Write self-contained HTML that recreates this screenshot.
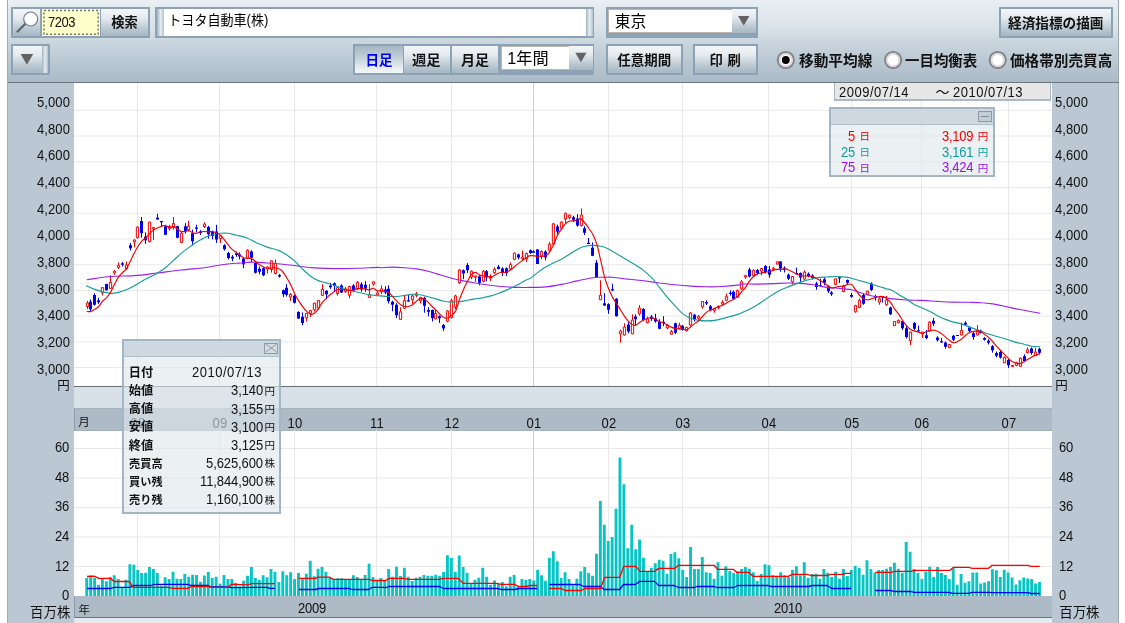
<!DOCTYPE html>
<html lang="ja"><head><meta charset="utf-8"><title>7203 トヨタ自動車(株) チャート</title>
<style>
html,body{margin:0;padding:0;background:#fff;}
body{width:1125px;height:623px;overflow:hidden;position:relative;font-family:"Liberation Sans",sans-serif;}
#app{position:absolute;left:0;top:0;width:1125px;height:623px;overflow:hidden;}
#app div{position:absolute;box-sizing:border-box;}
#app svg{position:absolute;left:0;top:0;}
.sr{position:absolute;overflow:hidden;white-space:nowrap;color:transparent;font-family:"Liberation Sans",sans-serif;}
.t{position:absolute;white-space:nowrap;font-family:"Liberation Sans",sans-serif;letter-spacing:-0.25px;will-change:transform;transform:scaleY(1.06);}
svg text{font-family:"Liberation Sans","Noto Sans CJK JP",sans-serif;}
</style></head>
<body><div id="app">
<div style="left:7px;top:0px;width:1px;height:623px;background:#a3abb3;"></div>
<div style="left:8px;top:0px;width:1111px;height:83px;background:linear-gradient(#e9eff3 0%,#dbe4ea 30%,#c3d0da 60%,#a9b9c6 100%);"></div>
<div style="left:1118px;top:0px;width:1px;height:623px;background:#9aa6b0;"></div>
<div style="left:8px;top:82px;width:1111px;height:1px;background:#6c7680;"></div>
<div style="left:8px;top:83px;width:66px;height:540px;background:#bbc8d3;"></div>
<div style="left:1052px;top:83px;width:66px;height:540px;background:#bbc8d3;"></div>
<div style="left:74px;top:83px;width:978px;height:303px;background:#fff;"></div>
<div style="left:74px;top:386px;width:978px;height:1px;background:#6a6f74;"></div>
<div style="left:74px;top:387px;width:978px;height:21px;background:#d9e1e8;"></div>
<div style="left:74px;top:408px;width:978px;height:22.6px;background:#aebbc7;border-top:1px solid #a3b1bd;border-bottom:1px solid #a3b1bd;border-left:1.5px solid #8f9ca8;"></div>
<div style="left:74px;top:430.6px;width:978px;height:165.4px;background:#fff;"></div>
<div style="left:74px;top:596px;width:978px;height:22px;background:#aebbc7;border-bottom:1px solid #6b747c;border-left:1.5px solid #8f9ca8;"></div>
<div style="left:74px;top:618px;width:978px;height:5px;background:#e3eaf0;"></div>
<div style="left:10.5px;top:7px;width:139px;height:31px;background:#8da2b4;"></div>
<div style="left:12.5px;top:9px;width:27.7px;height:27px;background:linear-gradient(#f3f6f8 0%,#e3e9ee 35%,#b9c7d1 75%,#a6b8c4 100%);"></div>
<div style="left:42px;top:8.8px;width:58px;height:27.5px;background:#ffffcc;"></div>
<div style="left:100.5px;top:9px;width:47px;height:27px;background:linear-gradient(#f3f6f8 0%,#e3e9ee 35%,#b9c7d1 75%,#a6b8c4 100%);"></div>
<div style="left:155px;top:7px;width:439px;height:31px;background:#8da2b4;"></div>
<div style="left:157px;top:9px;width:7px;height:27px;background:linear-gradient(90deg,#9fb2c1 0%,#e6ecf0 50%,#b4c3ce 100%);"></div>
<div style="left:164px;top:8.5px;width:421.5px;height:27.5px;background:#fff;"></div>
<div style="left:585.5px;top:9px;width:7px;height:27px;background:linear-gradient(90deg,#9fb2c1 0%,#e6ecf0 50%,#b4c3ce 100%);"></div>
<div style="left:605.5px;top:7px;width:152px;height:31px;background:#8da2b4;"></div>
<div style="left:607.5px;top:8.5px;width:124px;height:24px;background:#fff;border:1px solid rgba(125,112,100,0.5);border-right:none;"></div>
<div style="left:731.5px;top:8.5px;width:24.5px;height:24px;background:linear-gradient(#f3f6f8 0%,#e3e9ee 35%,#b9c7d1 75%,#a6b8c4 100%);"></div>
<div style="left:998.5px;top:7px;width:114.5px;height:31px;background:#8da2b4;"></div>
<div style="left:1000.5px;top:9px;width:110.5px;height:27px;background:linear-gradient(#f3f6f8 0%,#e3e9ee 35%,#b9c7d1 75%,#a6b8c4 100%);"></div>
<div style="left:10.5px;top:44px;width:39px;height:31px;background:#8da2b4;"></div>
<div style="left:12.5px;top:46px;width:29px;height:27px;background:linear-gradient(#f3f6f8 0%,#e3e9ee 35%,#b9c7d1 75%,#a6b8c4 100%);"></div>
<div style="left:41.5px;top:46px;width:6.5px;height:27px;background:linear-gradient(90deg,#9fb2c1 0%,#e6ecf0 50%,#b4c3ce 100%);"></div>
<div style="left:353px;top:44px;width:241px;height:31px;background:#8da2b4;"></div>
<div style="left:355px;top:46px;width:47.5px;height:27px;background:linear-gradient(#a6b8c4 0%,#bccad3 35%,#e6ecf0 80%,#f3f6f8 100%);"></div>
<div style="left:403.7px;top:46px;width:46.3px;height:27px;background:linear-gradient(#f3f6f8 0%,#e3e9ee 35%,#b9c7d1 75%,#a6b8c4 100%);"></div>
<div style="left:451.7px;top:46px;width:46.3px;height:27px;background:linear-gradient(#f3f6f8 0%,#e3e9ee 35%,#b9c7d1 75%,#a6b8c4 100%);"></div>
<div style="left:501px;top:45.5px;width:67.5px;height:24px;background:#fff;border:1px solid rgba(125,112,100,0.5);border-right:none;"></div>
<div style="left:568.5px;top:45.5px;width:24.5px;height:24px;background:linear-gradient(#f3f6f8 0%,#e3e9ee 35%,#b9c7d1 75%,#a6b8c4 100%);"></div>
<div style="left:605.5px;top:44px;width:77.5px;height:31px;background:#8da2b4;"></div>
<div style="left:607.5px;top:46px;width:73.5px;height:27px;background:linear-gradient(#f3f6f8 0%,#e3e9ee 35%,#b9c7d1 75%,#a6b8c4 100%);"></div>
<div style="left:692.5px;top:44px;width:65px;height:31px;background:#8da2b4;"></div>
<div style="left:694.5px;top:46px;width:61px;height:27px;background:linear-gradient(#f3f6f8 0%,#e3e9ee 35%,#b9c7d1 75%,#a6b8c4 100%);"></div>
<span class="t" style="right:1055.4px;top:95.10000000000001px;font-size:13px;line-height:16px;color:#111;letter-spacing:0.1px;">5,000</span>
<span class="t" style="left:1055.2px;top:95.10000000000001px;font-size:13px;line-height:16px;color:#111;letter-spacing:0.1px;">5,000</span>
<span class="t" style="right:1055.4px;top:121.76000000000002px;font-size:13px;line-height:16px;color:#111;letter-spacing:0.1px;">4,800</span>
<span class="t" style="left:1055.2px;top:121.76000000000002px;font-size:13px;line-height:16px;color:#111;letter-spacing:0.1px;">4,800</span>
<span class="t" style="right:1055.4px;top:148.42000000000002px;font-size:13px;line-height:16px;color:#111;letter-spacing:0.1px;">4,600</span>
<span class="t" style="left:1055.2px;top:148.42000000000002px;font-size:13px;line-height:16px;color:#111;letter-spacing:0.1px;">4,600</span>
<span class="t" style="right:1055.4px;top:175.08px;font-size:13px;line-height:16px;color:#111;letter-spacing:0.1px;">4,400</span>
<span class="t" style="left:1055.2px;top:175.08px;font-size:13px;line-height:16px;color:#111;letter-spacing:0.1px;">4,400</span>
<span class="t" style="right:1055.4px;top:201.74px;font-size:13px;line-height:16px;color:#111;letter-spacing:0.1px;">4,200</span>
<span class="t" style="left:1055.2px;top:201.74px;font-size:13px;line-height:16px;color:#111;letter-spacing:0.1px;">4,200</span>
<span class="t" style="right:1055.4px;top:228.4px;font-size:13px;line-height:16px;color:#111;letter-spacing:0.1px;">4,000</span>
<span class="t" style="left:1055.2px;top:228.4px;font-size:13px;line-height:16px;color:#111;letter-spacing:0.1px;">4,000</span>
<span class="t" style="right:1055.4px;top:255.06000000000003px;font-size:13px;line-height:16px;color:#111;letter-spacing:0.1px;">3,800</span>
<span class="t" style="left:1055.2px;top:255.06000000000003px;font-size:13px;line-height:16px;color:#111;letter-spacing:0.1px;">3,800</span>
<span class="t" style="right:1055.4px;top:281.71999999999997px;font-size:13px;line-height:16px;color:#111;letter-spacing:0.1px;">3,600</span>
<span class="t" style="left:1055.2px;top:281.71999999999997px;font-size:13px;line-height:16px;color:#111;letter-spacing:0.1px;">3,600</span>
<span class="t" style="right:1055.4px;top:308.38px;font-size:13px;line-height:16px;color:#111;letter-spacing:0.1px;">3,400</span>
<span class="t" style="left:1055.2px;top:308.38px;font-size:13px;line-height:16px;color:#111;letter-spacing:0.1px;">3,400</span>
<span class="t" style="right:1055.4px;top:335.03999999999996px;font-size:13px;line-height:16px;color:#111;letter-spacing:0.1px;">3,200</span>
<span class="t" style="left:1055.2px;top:335.03999999999996px;font-size:13px;line-height:16px;color:#111;letter-spacing:0.1px;">3,200</span>
<span class="t" style="right:1055.4px;top:361.7px;font-size:13px;line-height:16px;color:#111;letter-spacing:0.1px;">3,000</span>
<span class="t" style="left:1055.2px;top:361.7px;font-size:13px;line-height:16px;color:#111;letter-spacing:0.1px;">3,000</span>
<span class="t" style="right:1055.6px;top:440.09999999999997px;font-size:13px;line-height:16px;color:#111;">60</span>
<span class="t" style="left:1058.5px;top:440.09999999999997px;font-size:13px;line-height:16px;color:#111;">60</span>
<span class="t" style="right:1055.6px;top:469.74999999999994px;font-size:13px;line-height:16px;color:#111;">48</span>
<span class="t" style="left:1058.5px;top:469.74999999999994px;font-size:13px;line-height:16px;color:#111;">48</span>
<span class="t" style="right:1055.6px;top:499.4px;font-size:13px;line-height:16px;color:#111;">36</span>
<span class="t" style="left:1058.5px;top:499.4px;font-size:13px;line-height:16px;color:#111;">36</span>
<span class="t" style="right:1055.6px;top:529.05px;font-size:13px;line-height:16px;color:#111;">24</span>
<span class="t" style="left:1058.5px;top:529.05px;font-size:13px;line-height:16px;color:#111;">24</span>
<span class="t" style="right:1055.6px;top:558.6999999999999px;font-size:13px;line-height:16px;color:#111;">12</span>
<span class="t" style="left:1058.5px;top:558.6999999999999px;font-size:13px;line-height:16px;color:#111;">12</span>
<span class="t" style="right:1055.6px;top:588.35px;font-size:13px;line-height:16px;color:#111;">0</span>
<span class="t" style="left:1058.5px;top:588.35px;font-size:13px;line-height:16px;color:#111;">0</span>
<span class="t" style="left:37.5px;width:200px;text-align:center;top:416.29999999999995px;font-size:13px;line-height:16px;color:#111;letter-spacing:0.2px;">08</span>
<span class="t" style="left:119.5px;width:200px;text-align:center;top:416.29999999999995px;font-size:13px;line-height:16px;color:#111;letter-spacing:0.2px;">09</span>
<span class="t" style="left:194.5px;width:200px;text-align:center;top:416.29999999999995px;font-size:13px;line-height:16px;color:#111;letter-spacing:0.2px;">10</span>
<span class="t" style="left:276.5px;width:200px;text-align:center;top:416.29999999999995px;font-size:13px;line-height:16px;color:#111;letter-spacing:0.2px;">11</span>
<span class="t" style="left:351.5px;width:200px;text-align:center;top:416.29999999999995px;font-size:13px;line-height:16px;color:#111;letter-spacing:0.2px;">12</span>
<span class="t" style="left:433.5px;width:200px;text-align:center;top:416.29999999999995px;font-size:13px;line-height:16px;color:#111;letter-spacing:0.2px;">01</span>
<span class="t" style="left:508.5px;width:200px;text-align:center;top:416.29999999999995px;font-size:13px;line-height:16px;color:#111;letter-spacing:0.2px;">02</span>
<span class="t" style="left:582.5px;width:200px;text-align:center;top:416.29999999999995px;font-size:13px;line-height:16px;color:#111;letter-spacing:0.2px;">03</span>
<span class="t" style="left:668.5px;width:200px;text-align:center;top:416.29999999999995px;font-size:13px;line-height:16px;color:#111;letter-spacing:0.2px;">04</span>
<span class="t" style="left:751.5px;width:200px;text-align:center;top:416.29999999999995px;font-size:13px;line-height:16px;color:#111;letter-spacing:0.2px;">05</span>
<span class="t" style="left:821.5px;width:200px;text-align:center;top:416.29999999999995px;font-size:13px;line-height:16px;color:#111;letter-spacing:0.2px;">06</span>
<span class="t" style="left:908.5px;width:200px;text-align:center;top:416.29999999999995px;font-size:13px;line-height:16px;color:#111;letter-spacing:0.2px;">07</span>
<span class="t" style="left:211.5px;width:200px;text-align:center;top:601.1999999999999px;font-size:13px;line-height:16px;color:#111;">2009</span>
<span class="t" style="left:687.5px;width:200px;text-align:center;top:601.1999999999999px;font-size:13px;line-height:16px;color:#111;">2010</span>
<svg width="1125" height="623" viewBox="0 0 1125 623">
<path d="M74 110.30H1052M74 136.03H1052M74 161.76H1052M74 187.49H1052M74 213.22H1052M74 238.95H1052M74 264.68H1052M74 290.41H1052M74 316.14H1052M74 341.87H1052M74 367.60H1052M74 566.50H1052M74 537.00H1052M74 507.50H1052M74 478.00H1052M74 448.50H1052M137.5 83V386M137.5 430V596M219.5 83V386M219.5 430V596M294.5 83V386M294.5 430V596M376.5 83V386M376.5 430V596M451.5 83V386M451.5 430V596M608.5 83V386M608.5 430V596M682.5 83V386M682.5 430V596M768.5 83V386M768.5 430V596M851.5 83V386M851.5 430V596M921.5 83V386M921.5 430V596M1008.5 83V386M1008.5 430V596" stroke="#e8e8e8" stroke-width="1" fill="none"/>
<path d="M533.5 83V386M533.5 430V596" stroke="#d6cf9c" stroke-width="1" fill="none"/>
<path d="M85.31 596V578.08H88.21V596ZM89.23 596V575.52H92.13V596ZM93.15 596V578.08H96.05V596ZM97.07 596V584.77H99.97V596ZM100.99 596V579.08H103.89V596ZM104.91 596V581.21H107.81V596ZM108.83 596V576.94H111.73V596ZM112.75 596V575.23H115.65V596ZM116.68 596V579.08H119.58V596ZM120.60 596V586.90H123.50V596ZM124.52 596V579.79H127.42V596ZM128.44 596V564.14H131.34V596ZM132.36 596V564.85H135.26V596ZM136.28 596V570.11H139.18V596ZM140.20 596V573.10H143.10V596ZM144.12 596V572.67H147.02V596ZM148.04 596V566.98H150.94V596ZM151.96 596V569.12H154.86V596ZM155.88 596V573.10H158.78V596ZM159.80 596V585.48H162.70V596ZM163.72 596V577.23H166.62V596ZM167.64 596V579.08H170.54V596ZM171.57 596V571.68H174.47V596ZM175.49 596V578.79H178.39V596ZM179.41 596V579.08H182.31V596ZM183.33 596V574.10H186.23V596ZM187.25 596V576.66H190.15V596ZM191.17 596V574.81H194.07V596ZM195.09 596V575.09H197.99V596ZM199.01 596V581.64H201.91V596ZM202.93 596V575.52H205.83V596ZM206.85 596V571.96H209.75V596ZM210.77 596V578.08H213.67V596ZM214.69 596V576.66H217.59V596ZM218.61 596V583.77H221.51V596ZM222.53 596V575.09H225.43V596ZM226.46 596V579.08H229.36V596ZM230.38 596V579.08H233.28V596ZM234.30 596V582.92H237.20V596ZM238.22 596V586.19H241.12V596ZM242.14 596V580.78H245.04V596ZM246.06 596V575.80H248.96V596ZM249.98 596V566.98H252.88V596ZM253.90 596V577.94H256.80V596ZM257.82 596V579.79H260.72V596ZM261.74 596V575.23H264.64V596ZM265.66 596V577.23H268.56V596ZM269.58 596V569.12H272.48V596ZM273.50 596V571.68H276.40V596ZM277.42 596V581.92H280.32V596ZM281.34 596V571.25H284.25V596ZM285.27 596V575.23H288.17V596ZM289.19 596V572.25H292.09V596ZM293.11 596V579.08H296.01V596ZM297.03 596V573.10H299.93V596ZM300.95 596V579.08H303.85V596ZM304.87 596V573.81H307.77V596ZM308.79 596V560.87H311.69V596ZM312.71 596V576.23H315.61V596ZM316.63 596V568.83H319.53V596ZM320.55 596V566.98H323.45V596ZM324.47 596V571.68H327.37V596ZM328.39 596V576.94H331.29V596ZM332.31 596V579.08H335.21V596ZM336.23 596V578.36H339.13V596ZM340.16 596V578.36H343.06V596ZM344.08 596V579.79H346.98V596ZM348.00 596V579.79H350.90V596ZM351.92 596V575.23H354.82V596ZM355.84 596V576.94H358.74V596ZM359.76 596V579.79H362.66V596ZM363.68 596V574.95H366.58V596ZM367.60 596V563.85H370.50V596ZM371.52 596V576.94H374.42V596ZM375.44 596V580.50H378.34V596ZM379.36 596V577.94H382.26V596ZM383.28 596V580.50H386.18V596ZM387.20 596V569.12H390.10V596ZM391.12 596V576.66H394.02V596ZM395.05 596V566.70H397.95V596ZM398.97 596V575.95H401.87V596ZM402.89 596V567.70H405.79V596ZM406.81 596V576.66H409.71V596ZM410.73 596V580.92H413.63V596ZM414.65 596V577.65H417.55V596ZM418.57 596V576.66H421.47V596ZM422.49 596V574.95H425.39V596ZM426.41 596V575.80H429.31V596ZM430.33 596V575.80H433.23V596ZM434.25 596V574.81H437.15V596ZM438.17 596V575.80H441.07V596ZM442.09 596V571.96H444.99V596ZM446.01 596V555.18H448.91V596ZM449.94 596V558.02H452.84V596ZM453.86 596V571.68H456.76V596ZM457.78 596V555.60H460.68V596ZM461.70 596V566.98H464.60V596ZM465.62 596V572.67H468.52V596ZM469.54 596V584.05H472.44V596ZM473.46 596V579.79H476.36V596ZM477.38 596V577.65H480.28V596ZM481.30 596V567.70H484.20V596ZM485.22 596V576.66H488.12V596ZM489.14 596V584.77H492.04V596ZM493.06 596V580.50H495.96V596ZM496.98 596V583.34H499.88V596ZM500.90 596V581.92H503.80V596ZM504.82 596V586.19H507.72V596ZM508.75 596V576.66H511.65V596ZM512.67 596V575.09H515.57V596ZM516.59 596V586.19H519.49V596ZM520.51 596V579.08H523.41V596ZM524.43 596V580.07H527.33V596ZM528.35 596V579.08H531.25V596ZM532.27 596V580.50H535.17V596ZM536.19 596V569.83H539.09V596ZM540.11 596V575.23H543.01V596ZM544.03 596V580.78H546.93V596ZM547.95 596V557.74H550.85V596ZM551.87 596V551.34H554.77V596ZM555.79 596V561.29H558.69V596ZM559.71 596V577.94H562.61V596ZM563.64 596V572.25H566.54V596ZM567.56 596V579.08H570.46V596ZM571.48 596V585.48H574.38V596ZM575.40 596V578.79H578.30V596ZM579.32 596V571.25H582.22V596ZM583.24 596V566.98H586.14V596ZM587.16 596V573.10H590.06V596ZM591.08 596V575.80H593.98V596ZM595.00 596V553.76H597.90V596ZM598.92 596V501.12H601.82V596ZM602.84 596V524.75H605.74V596ZM606.76 596V540.92H609.66V596ZM610.68 596V537.07H613.58V596ZM614.60 596V508.82H617.50V596ZM618.53 596V457.46H621.43V596ZM622.45 596V484.17H625.35V596ZM626.37 596V548.37H629.27V596ZM630.29 596V524.75H633.19V596ZM634.21 596V549.14H637.11V596ZM638.13 596V539.38H641.03V596ZM642.05 596V557.74H644.95V596ZM645.97 596V571.96H648.87V596ZM649.89 596V567.70H652.79V596ZM653.81 596V563.14H656.71V596ZM657.73 596V559.87H660.63V596ZM661.65 596V560.87H664.55V596ZM665.57 596V573.81H668.47V596ZM669.49 596V553.90H672.39V596ZM673.41 596V552.33H676.31V596ZM677.34 596V558.17H680.24V596ZM681.26 596V570.11H684.16V596ZM685.18 596V576.94H688.08V596ZM689.10 596V547.07H692.00V596ZM693.02 596V569.12H695.92V596ZM696.94 596V569.12H699.84V596ZM700.86 596V557.03H703.76V596ZM704.78 596V572.25H707.68V596ZM708.70 596V573.10H711.60V596ZM712.62 596V579.08H715.52V596ZM716.54 596V562.29H719.44V596ZM720.46 596V575.80H723.36V596ZM724.38 596V566.27H727.28V596ZM728.30 596V570.97H731.20V596ZM732.23 596V573.10H735.13V596ZM736.15 596V571.25H739.05V596ZM740.07 596V569.12H742.97V596ZM743.99 596V566.98H746.89V596ZM747.91 596V568.69H750.81V596ZM751.83 596V572.25H754.73V596ZM755.75 596V580.92H758.65V596ZM759.67 596V574.10H762.57V596ZM763.59 596V564.14H766.49V596ZM767.51 596V565.14H770.41V596ZM771.43 596V575.23H774.33V596ZM775.35 596V576.94H778.25V596ZM779.27 596V572.25H782.17V596ZM783.19 596V575.23H786.09V596ZM787.12 596V576.94H790.02V596ZM791.04 596V569.83H793.94V596ZM794.96 596V566.27H797.86V596ZM798.88 596V575.23H801.78V596ZM802.80 596V562.29H805.70V596ZM806.72 596V577.94H809.62V596ZM810.64 596V574.10H813.54V596ZM814.56 596V573.81H817.46V596ZM818.48 596V578.79H821.38V596ZM822.40 596V569.12H825.30V596ZM826.32 596V572.67H829.22V596ZM830.24 596V576.94H833.14V596ZM834.16 596V571.68H837.06V596ZM838.08 596V578.79H840.98V596ZM842.01 596V569.12H844.91V596ZM845.93 596V575.95H848.83V596ZM849.85 596V570.11H852.75V596ZM853.77 596V565.99H856.67V596ZM857.69 596V567.70H860.59V596ZM861.61 596V574.81H864.51V596ZM865.53 596V560.16H868.43V596ZM869.45 596V569.12H872.35V596ZM873.37 596V572.67H876.27V596ZM877.29 596V570.11H880.19V596ZM881.21 596V570.11H884.11V596ZM885.13 596V568.69H888.03V596ZM889.05 596V566.98H891.95V596ZM892.97 596V562.72H895.87V596ZM896.89 596V568.69H899.79V596ZM900.82 596V572.67H903.72V596ZM904.74 596V542.09H907.64V596ZM908.66 596V551.76H911.56V596ZM912.58 596V569.12H915.48V596ZM916.50 596V573.10H919.40V596ZM920.42 596V579.08H923.32V596ZM924.34 596V571.68H927.24V596ZM928.26 596V566.70H931.16V596ZM932.18 596V576.94H935.08V596ZM936.10 596V566.98H939.00V596ZM940.02 596V573.10H942.92V596ZM943.94 596V575.09H946.84V596ZM947.86 596V579.08H950.76V596ZM951.78 596V568.12H954.68V596ZM955.71 596V584.77H958.61V596ZM959.63 596V574.10H962.53V596ZM963.55 596V582.67H966.45V596ZM967.47 596V581.25H970.37V596ZM971.39 596V572.43H974.29V596ZM975.31 596V572.43H978.21V596ZM979.23 596V583.39H982.13V596ZM983.15 596V582.39H986.05V596ZM987.07 596V581.25H989.97V596ZM990.99 596V569.16H993.89V596ZM994.91 596V570.30H997.81V596ZM998.83 596V576.98H1001.73V596ZM1002.75 596V569.87H1005.65V596ZM1006.67 596V572.43H1009.57V596ZM1010.60 596V577.41H1013.50V596ZM1014.52 596V584.52H1017.42V596ZM1018.44 596V580.26H1021.34V596ZM1022.36 596V577.41H1025.26V596ZM1026.28 596V578.41H1029.18V596ZM1030.20 596V579.12H1033.10V596ZM1034.12 596V583.39H1037.02V596ZM1038.04 596V581.96H1040.94V596Z" fill="#0ac4c4"/>
<path d="M87.0 588.5L110.6 588.5L114.1 587.3L129.8 587.3L133.8 585.5L151.1 585.5L154.0 584.3L188.1 584.3L191.0 585.5L208.0 585.5L210.9 586.9L227.9 586.9L231.5 587.6L235.0 587.6L267.0 587.3L269.8 588.3L274.8 588.3M298.7 589.5L315.3 589.5L318.9 588.5L349.5 588.5L352.3 589.5L368.7 589.5L372.2 587.3L383.6 587.3L385.7 587.6L389.2 586.5L439.7 586.5L443.3 588.5L498.1 588.5L501.6 589.5L515.1 589.5L518.7 588.5L537.2 588.5M549.2 584.5L579.8 584.5L583.8 586.5L600.4 586.5L604.0 589.5L619.6 589.5L623.6 584.5L635.3 584.5L639.8 581.4L654.5 581.4L658.7 585.5L674.4 585.5L678.6 587.5L680.8 587.5L694.2 587.5L697.1 586.5L714.1 586.5L717.0 587.5L734.1 587.5L737.6 585.5L768.2 585.5L771.7 586.5L808.7 586.5L812.3 585.5L827.2 585.5L831.5 588.5L840.0 588.5L851.1 588.5M875.1 590.5L891.2 590.5L894.7 591.5L911.1 591.5L913.9 592.4L949.5 592.4L952.3 593.4L968.7 593.4L972.2 592.4L990.0 592.4L991.5 592.6L1027.6 592.6L1031.1 593.5L1039.7 593.5" stroke="#0000ff" stroke-width="1.3" fill="none" stroke-linejoin="round"/>
<path d="M87.0 576.5L94.2 576.2L98.8 578.4L110.6 578.4L114.1 581.5L129.1 581.5L133.3 587.3L168.2 587.3L172.5 588.3L188.1 588.3L191.7 586.5L208.0 586.5L211.6 587.3L227.9 587.3L231.5 584.3L235.0 584.3L247.8 584.8L251.3 583.6L274.8 583.6M298.7 578.4L315.3 578.4L318.2 577.2L329.6 577.2L333.1 579.4L369.4 579.4L372.2 580.5L383.6 580.5L385.7 580.5L389.2 578.4L404.2 578.4L407.7 579.4L439.7 579.4L443.3 578.4L458.2 578.4L463.2 583.3L496.6 583.3L500.9 584.3L514.4 584.3L518.7 586.5L526.5 586.5L530.1 585.5L537.2 585.5M549.2 588.5L561.3 588.5L564.9 590.5L581.2 590.5L584.8 588.5L600.4 588.5L604.7 577.4L619.6 577.4L623.9 566.3L636.0 566.3L639.8 571.4L654.5 571.4L658.7 568.4L674.4 568.4L678.6 565.3L680.8 565.3L714.1 565.3L717.7 569.3L733.3 569.3L736.9 572.4L749.0 572.4L753.3 576.4L788.1 576.4L792.4 574.4L807.3 574.4L810.9 575.5L827.2 575.5L830.8 574.4L840.0 574.4L842.8 574.4L845.6 573.4L851.1 573.4M875.1 572.4L891.2 572.4L894.7 571.4L911.1 571.4L914.6 570.4L949.5 570.4L953.5 567.3L968.7 567.3L972.2 568.3L987.9 568.3L990.0 567.3L991.5 565.3L1027.6 565.3L1031.1 566.3L1039.7 566.3" stroke="#ff0000" stroke-width="1.3" fill="none" stroke-linejoin="round"/>
<path d="M90.50 299.48V310.96M94.50 293.30V305.66M98.50 297.72V303.90M106.50 283.76V290.65M122.50 261.87V266.46M130.50 242.97V250.56M141.50 217.01V237.67M145.50 232.37V243.85M157.50 213.83V219.48M161.50 221.25V227.08M165.50 225.84V235.02M177.50 225.84V238.20M185.50 223.19V233.61M192.50 229.72V245.62M196.50 224.78V232.37M200.50 230.08V235.02M208.50 225.84V238.55M212.50 230.61V239.44M216.50 224.78V242.97M224.50 244.21V250.56M228.50 251.80V259.39M232.50 255.02V261.20M236.50 251.49V256.79M239.50 252.37V259.44M243.50 257.67V268.27M251.50 250.25V262.09M255.50 262.09V273.57M259.50 266.50V274.45M263.50 267.38V276.21M279.50 274.09V277.63M283.50 289.46V297.05M286.50 284.16V296.52M294.50 294.76V303.59M298.50 311.18V318.95M302.50 312.42V325.31M326.50 290.34V299.17M330.50 282.92V288.93M334.50 282.40V291.23M341.50 284.16V292.99M353.50 284.16V292.11M361.50 282.40V291.75M365.50 281.16V291.75M385.50 286.21V294.16M388.50 285.33V303.52M392.50 300.70V311.29M396.50 302.99V318.00M408.50 295.04V301.75M424.50 296.81V312.70M428.50 307.05V316.24M432.50 309.53V321.53M439.50 315.35V322.95M443.50 323.83V330.89M463.50 269.44V279.15M467.50 262.90V272.97M479.50 275.26V285.33M486.50 269.97V281.27M498.50 265.02V269.44M502.50 267.32V275.97M506.50 267.32V275.97M518.50 253.54V259.37M530.50 249.45V253.86M533.50 250.33V252.63M537.50 249.09V263.93M545.50 250.33V260.40M557.50 224.72V234.44M573.50 215.89V222.08M577.50 214.13V226.84M584.50 226.14V234.97M588.50 237.97V243.80M592.50 242.38V256.16M596.50 260.04V277.70M604.50 293.20V305.92M608.50 303.27V313.86M612.50 283.84V290.91M616.50 297.97V316.51M628.50 322.16V333.29M635.50 314.39V324.99M643.50 308.04V320.93M651.50 315.10V320.93M655.50 313.86V322.69M659.50 319.16V329.23M663.50 316.16V326.23M675.50 322.69V334.17M682.50 324.99V330.64M694.50 313.86V321.46M706.50 300.26V305.03M710.50 305.03V311.21M730.50 290.38V295.67M733.50 290.38V299.21M749.50 267.67V277.38M757.50 268.91V274.74M765.50 265.02V273.50M769.50 265.91V277.74M780.50 261.14V271.73M784.50 266.43V272.44M788.50 273.50V280.03M796.50 267.67V274.21M800.50 272.44V281.80M808.50 272.44V277.38M812.50 274.21V279.50M816.50 281.80V289.75M820.50 278.80V286.21M824.50 277.38V285.33M828.50 285.33V292.92M831.50 291.16V295.93M839.50 277.38V283.04M847.50 279.50V284.45M851.50 292.92V297.69M863.50 293.28V304.76M871.50 282.33V291.16M875.50 294.69V300.70M882.50 295.93V302.46M890.50 306.73V315.03M902.50 320.33V330.04M906.50 325.63V338.52M914.50 322.10V330.04M918.50 325.63V331.28M926.50 330.04V339.23M933.50 318.04V326.16M937.50 336.23V341.52M941.50 337.99V342.41M945.50 341.52V348.59M953.50 334.99V340.99M957.50 334.99V336.05M965.50 321.21V325.63M969.50 326.51V332.16M973.50 332.16V339.76M980.50 329.69V333.58M984.50 337.11V340.64M988.50 339.23V344.53M992.50 345.06V352.65M996.50 351.59V357.42M1000.50 349.82V358.65M1008.50 358.30V368.01M1024.50 354.42V362.19M1031.50 347.35V354.77M1039.50 347.70V354.42" stroke="#0000f0" stroke-width="1" fill="none"/>
<path d="M89.00 301.78H92.00V309.19H89.00ZM93.00 295.07H96.00V304.78H93.00ZM97.00 300.36H100.00V302.13H97.00ZM105.00 284.12H108.00V290.30H105.00ZM121.00 263.28H124.00V264.69H121.00ZM129.00 245.26H132.00V248.27H129.00ZM140.00 220.89H143.00V233.26H140.00ZM144.00 236.79H147.00V240.32H144.00ZM156.00 217.72H159.00V219.48H156.00ZM160.00 221.09H163.00V222.29H160.00ZM164.00 226.19H167.00V234.67H164.00ZM176.00 226.19H179.00V237.67H176.00ZM184.00 226.19H187.00V231.49H184.00ZM191.00 233.26H194.00V241.20H191.00ZM195.00 227.60H198.00V228.84H195.00ZM199.00 231.49H202.00V232.90H199.00ZM207.00 227.08H210.00V234.14H207.00ZM211.00 231.49H214.00V235.91H211.00ZM215.00 231.49H218.00V239.44H215.00ZM223.00 245.26H226.00V249.15H223.00ZM227.00 253.04H230.00V257.98H227.00ZM231.00 256.79H234.00V258.55H231.00ZM235.00 253.26H238.00V255.02H235.00ZM238.00 254.14H241.00V256.43H238.00ZM242.00 258.55H245.00V264.21H242.00ZM250.00 251.49H253.00V257.67H250.00ZM254.00 262.97H257.00V272.68H254.00ZM258.00 268.80H261.00V271.80H258.00ZM262.00 268.27H265.00V275.33H262.00ZM278.00 274.98H281.00V276.57H278.00ZM282.00 290.34H285.00V294.23H282.00ZM285.00 287.69H288.00V294.76H285.00ZM293.00 295.64H296.00V302.70H293.00ZM297.00 311.89H300.00V318.60H297.00ZM301.00 316.83H304.00V323.01H301.00ZM325.00 290.70H328.00V294.23H325.00ZM329.00 285.57H332.00V287.16H329.00ZM333.00 283.28H336.00V285.93H333.00ZM340.00 285.57H343.00V292.46H340.00ZM352.00 285.57H355.00V290.70H352.00ZM360.00 284.16H363.00V289.46H360.00ZM364.00 284.69H367.00V288.58H364.00ZM384.00 289.39H387.00V292.40H384.00ZM387.00 288.86H390.00V301.23H387.00ZM391.00 301.75H394.00V304.76H391.00ZM395.00 304.76H398.00V315.35H395.00ZM407.00 300.27H410.00V301.47H407.00ZM423.00 297.69H426.00V305.64H423.00ZM427.00 310.06H430.00V311.82H427.00ZM431.00 310.06H434.00V318.00H431.00ZM438.00 316.24H441.00V318.36H438.00ZM442.00 325.07H445.00V328.60H442.00ZM462.00 270.32H465.00V273.50H462.00ZM466.00 265.02H469.00V270.32H466.00ZM478.00 276.50H481.00V282.68H478.00ZM485.00 271.20H488.00V277.38H485.00ZM497.00 266.79H500.00V268.91H497.00ZM501.00 268.55H504.00V272.09H501.00ZM505.00 268.20H508.00V272.97H505.00ZM517.00 254.43H520.00V257.60H517.00ZM529.00 250.33H532.00V252.98H529.00ZM532.00 251.21H535.00V252.63H532.00ZM536.00 249.45H539.00V263.93H536.00ZM544.00 251.57H547.00V257.40H544.00ZM556.00 226.49H559.00V231.79H556.00ZM572.00 217.31H575.00V219.78H572.00ZM576.00 218.54H579.00V225.61H576.00ZM583.00 228.26H586.00V232.67H583.00ZM587.00 242.84H590.00V244.04H587.00ZM591.00 247.68H594.00V255.63H591.00ZM595.00 262.69H598.00V277.35H595.00ZM603.00 303.27H606.00V305.56H603.00ZM607.00 304.15H610.00V309.80H607.00ZM611.00 289.14H614.00V290.38H611.00ZM615.00 298.85H618.00V316.16H615.00ZM627.00 324.46H630.00V331.52H627.00ZM634.00 316.51H637.00V319.16H634.00ZM642.00 309.09H645.00V320.04H642.00ZM650.00 316.51H653.00V318.63H650.00ZM654.00 318.28H657.00V321.46H654.00ZM658.00 321.81H661.00V328.87H658.00ZM662.00 321.81H665.00V323.22H662.00ZM674.00 323.22H677.00V332.76H674.00ZM681.00 325.70H684.00V329.76H681.00ZM693.00 314.75H696.00V319.16H693.00ZM705.00 302.03H708.00V303.44H705.00ZM709.00 306.27H712.00V309.80H709.00ZM729.00 292.67H732.00V293.91H729.00ZM732.00 291.79H735.00V298.85H732.00ZM748.00 269.44H751.00V276.50H748.00ZM756.00 269.97H759.00V272.97H756.00ZM764.00 265.91H767.00V272.09H764.00ZM768.00 269.44H771.00V274.74H768.00ZM779.00 261.49H782.00V268.55H779.00ZM783.00 267.67H786.00V269.44H783.00ZM787.00 274.74H790.00V278.80H787.00ZM795.00 272.97H798.00V274.21H795.00ZM799.00 272.97H802.00V277.38H799.00ZM807.00 273.85H810.00V275.97H807.00ZM811.00 275.62H814.00V277.74H811.00ZM815.00 283.57H818.00V287.10H815.00ZM819.00 285.17H822.00V286.37H819.00ZM823.00 279.15H826.00V282.68H823.00ZM827.00 286.21H830.00V291.16H827.00ZM830.00 292.40H833.00V294.16H830.00ZM838.00 277.31H841.00V278.51H838.00ZM846.00 280.03H849.00V282.68H846.00ZM850.00 295.04H853.00V296.81H850.00ZM862.00 295.04H865.00V303.87H862.00ZM870.00 283.57H873.00V290.10H870.00ZM874.00 295.93H877.00V297.69H874.00ZM881.00 295.93H884.00V297.16H881.00ZM889.00 307.44H892.00V314.15H889.00ZM901.00 321.21H904.00V328.28H901.00ZM905.00 328.28H908.00V337.11H905.00ZM913.00 322.98H916.00V328.63H913.00ZM917.00 330.24H920.00V331.44H917.00ZM925.00 335.34H928.00V337.99H925.00ZM932.00 320.86H935.00V323.86H932.00ZM936.00 337.46H939.00V340.29H936.00ZM940.00 341.36H943.00V342.56H940.00ZM944.00 342.41H947.00V346.82H944.00ZM952.00 335.70H955.00V339.76H952.00ZM956.00 334.92H959.00V336.12H956.00ZM964.00 322.63H967.00V324.75H964.00ZM968.00 327.40H971.00V330.93H968.00ZM972.00 333.22H975.00V337.11H972.00ZM979.00 330.40H982.00V332.69H979.00ZM983.00 337.99H986.00V339.76H983.00ZM987.00 340.64H990.00V342.76H987.00ZM991.00 346.29H994.00V350.35H991.00ZM995.00 353.00H998.00V355.65H995.00ZM999.00 352.12H1002.00V357.42H999.00ZM1007.00 360.07H1010.00V365.36H1007.00ZM1023.00 356.18H1026.00V360.95H1023.00ZM1030.00 348.59H1033.00V353.00H1030.00ZM1038.00 349.12H1041.00V352.65H1038.00Z" fill="#0000f0"/>
<path d="M87.50 300.89V303.01M87.50 306.55V309.19M102.50 287.12V287.65M102.50 292.95V295.42M110.50 275.29V282.35M110.50 288.36V288.89M114.50 269.99V271.23M114.50 272.99V274.76M118.50 262.40V265.57M118.50 267.34V268.93M126.50 261.51V265.04M126.50 268.58V269.99M134.50 239.44V239.97M134.50 241.73V247.38M137.50 226.19V227.08M137.50 237.67V238.55M149.50 221.78V222.13M149.50 241.73V242.44M153.50 227.60V227.60M153.50 228.84V239.97M169.50 224.78V226.55M169.50 228.84V230.61M173.50 217.01V223.54M173.50 227.60V229.72M181.50 231.49V233.26M181.50 242.44V242.97M188.50 220.89V226.19M188.50 229.72V231.49M204.50 222.31V224.07M204.50 226.55V227.96M220.50 235.02V235.91M220.50 238.55V242.97M247.50 249.37V250.25M247.50 258.55V259.44M267.50 266.50V267.03M267.50 269.15V273.57M271.50 260.32V260.85M271.50 269.50V272.68M275.50 259.44V263.50M275.50 273.57V274.45M290.50 292.99V294.40M290.50 297.05V300.94M306.50 312.95V313.30M306.50 317.72V321.25M310.50 309.77V310.65M310.50 313.30V316.83M314.50 302.70V303.23M314.50 309.77V311.53M318.50 300.06V300.58M318.50 308.00V309.77M322.50 284.16V289.46M322.50 295.29V295.99M337.50 286.81V287.69M337.50 293.52V295.64M345.50 286.81V288.93M345.50 291.75V292.99M349.50 285.93V286.46M349.50 295.29V298.29M357.50 281.16V282.40M357.50 288.93V289.99M369.50 284.16V294.76M369.50 297.41V297.41M373.50 281.16V281.87M373.50 284.16V285.93M377.50 291.23V292.99M377.50 294.76V295.29M381.50 285.33V288.86M381.50 291.87V294.16M400.50 307.41V311.82M400.50 319.42V319.77M404.50 295.93V300.70M404.50 308.29V308.82M412.50 294.16V295.93M412.50 299.46V303.87M416.50 291.87V293.81M416.50 295.40V297.16M420.50 296.81V297.69M420.50 300.70V303.52M435.50 308.82V313.59M435.50 318.89V319.42M447.50 310.06V310.94M447.50 321.18V322.42M451.50 298.58V300.70M451.50 317.65V318.36M455.50 294.69V295.93M455.50 307.05V309.17M459.50 268.91V269.97M459.50 282.68V284.09M471.50 270.32V271.20M471.50 277.03V279.15M475.50 275.97V275.90M475.50 277.10V281.80M483.50 269.97V271.20M483.50 281.27V282.33M490.50 274.21V276.50M490.50 278.27V280.92M494.50 267.32V269.44M494.50 272.44V273.85M510.50 262.37V264.67M510.50 268.91V269.97M514.50 252.66V253.19M514.50 259.37V260.08M522.50 250.54V257.08M522.50 258.84V260.08M526.50 252.66V253.54M526.50 258.84V261.84M541.50 250.33V251.57M541.50 256.51V259.16M549.50 242.03V244.15M549.50 250.33V251.21M553.50 222.96V223.84M553.50 244.15V245.03M561.50 221.19V222.08M561.50 228.26V228.61M565.50 212.72V213.25M565.50 219.07V222.96M569.50 214.48V215.01M569.50 217.66V219.43M581.50 208.48V215.01M581.50 225.61V226.49M600.50 280.31V295.32M600.50 299.74V299.74M620.50 329.76V331.17M620.50 333.82V342.65M624.50 323.22V327.11M624.50 335.06V335.58M632.50 314.39V320.04M632.50 333.82V334.17M639.50 305.03V308.04M639.50 313.86V315.63M647.50 316.51V319.16M647.50 322.69V323.22M667.50 323.93V325.34M667.50 327.99V329.23M671.50 329.76V331.52M671.50 334.17V334.53M679.50 322.69V325.34M679.50 328.52V329.23M686.50 326.75V327.46M686.50 330.64V331.52M690.50 312.10V312.98M690.50 324.99V325.70M698.50 315.10V316.16M698.50 318.28V319.69M702.50 300.97V301.50M702.50 306.80V308.57M714.50 307.68V308.57M714.50 310.33V312.63M718.50 305.56V306.27M718.50 307.68V309.45M722.50 300.26V302.38M722.50 304.15V305.03M726.50 293.55V296.73M726.50 300.26V300.97M737.50 289.67V290.38M737.50 297.09V297.44M741.50 280.03V281.80M741.50 288.86V289.75M745.50 275.26V275.62M745.50 277.03V278.80M753.50 269.44V270.32M753.50 275.62V275.97M761.50 268.20V268.55M761.50 271.20V275.26M773.50 266.79V268.20M773.50 269.44V271.20M777.50 261.49V261.84M777.50 264.14V264.67M792.50 275.97V276.50M792.50 281.80V284.45M804.50 270.32V272.09M804.50 279.15V280.03M835.50 278.27V278.80M835.50 284.45V284.80M843.50 284.80V285.86M843.50 291.51V292.40M855.50 304.76V305.64M855.50 311.82V312.70M859.50 298.58V300.34M859.50 307.41V308.29M867.50 290.63V291.16M867.50 294.69V295.04M879.50 297.16V298.93M879.50 302.11V304.76M886.50 295.93V299.99M886.50 304.76V305.99M894.50 321.21V321.57M894.50 325.63V326.16M898.50 319.45V320.33M898.50 322.63V323.33M910.50 331.46V332.16M910.50 340.64V345.06M922.50 331.81V332.16M922.50 333.93V337.99M929.50 321.21V322.10M929.50 330.93V331.46M949.50 344.17V344.53M949.50 347.70V348.06M961.50 322.63V330.40M961.50 334.99V335.34M977.50 325.10V330.04M977.50 334.99V335.34M1004.50 356.53V357.42M1004.50 362.72V363.25M1012.50 365.36V365.36M1012.50 366.60V366.60M1016.50 361.83V362.72M1016.50 365.36V366.25M1020.50 357.42V358.30M1020.50 366.25V366.78M1027.50 347.35V349.82M1027.50 352.65V353.36M1035.50 347.70V352.12M1035.50 355.65V355.65" stroke="#f00000" stroke-width="1" fill="none"/>
<path d="M86.35 303.01H88.65V306.55H86.35ZM101.35 287.65H103.65V292.95H101.35ZM109.35 282.35H111.65V288.36H109.35ZM113.35 271.23H115.65V272.99H113.35ZM117.35 265.57H119.65V267.34H117.35ZM125.35 265.04H127.65V268.58H125.35ZM133.35 239.97H135.65V241.73H133.35ZM136.35 227.08H138.65V237.67H136.35ZM148.35 222.13H150.65V241.73H148.35ZM152.35 227.60H154.65V228.84H152.35ZM168.35 226.55H170.65V228.84H168.35ZM172.35 223.54H174.65V227.60H172.35ZM180.35 233.26H182.65V242.44H180.35ZM187.35 226.19H189.65V229.72H187.35ZM203.35 224.07H205.65V226.55H203.35ZM219.35 235.91H221.65V238.55H219.35ZM246.35 250.25H248.65V258.55H246.35ZM266.35 267.03H268.65V269.15H266.35ZM270.35 260.85H272.65V269.50H270.35ZM274.35 263.50H276.65V273.57H274.35ZM289.35 294.40H291.65V297.05H289.35ZM305.35 313.30H307.65V317.72H305.35ZM309.35 310.65H311.65V313.30H309.35ZM313.35 303.23H315.65V309.77H313.35ZM317.35 300.58H319.65V308.00H317.35ZM321.35 289.46H323.65V295.29H321.35ZM336.35 287.69H338.65V293.52H336.35ZM344.35 288.93H346.65V291.75H344.35ZM348.35 286.46H350.65V295.29H348.35ZM356.35 282.40H358.65V288.93H356.35ZM368.35 294.76H370.65V297.41H368.35ZM372.35 281.87H374.65V284.16H372.35ZM376.35 292.99H378.65V294.76H376.35ZM380.35 288.86H382.65V291.87H380.35ZM399.35 311.82H401.65V319.42H399.35ZM403.35 300.70H405.65V308.29H403.35ZM411.35 295.93H413.65V299.46H411.35ZM415.35 293.81H417.65V295.40H415.35ZM419.35 297.69H421.65V300.70H419.35ZM434.35 313.59H436.65V318.89H434.35ZM446.35 310.94H448.65V321.18H446.35ZM450.35 300.70H452.65V317.65H450.35ZM454.35 295.93H456.65V307.05H454.35ZM458.35 269.97H460.65V282.68H458.35ZM470.35 271.20H472.65V277.03H470.35ZM474.35 275.90H476.65V277.10H474.35ZM482.35 271.20H484.65V281.27H482.35ZM489.35 276.50H491.65V278.27H489.35ZM493.35 269.44H495.65V272.44H493.35ZM509.35 264.67H511.65V268.91H509.35ZM513.35 253.19H515.65V259.37H513.35ZM521.35 257.08H523.65V258.84H521.35ZM525.35 253.54H527.65V258.84H525.35ZM540.35 251.57H542.65V256.51H540.35ZM548.35 244.15H550.65V250.33H548.35ZM552.35 223.84H554.65V244.15H552.35ZM560.35 222.08H562.65V228.26H560.35ZM564.35 213.25H566.65V219.07H564.35ZM568.35 215.01H570.65V217.66H568.35ZM580.35 215.01H582.65V225.61H580.35ZM599.35 295.32H601.65V299.74H599.35ZM619.35 331.17H621.65V333.82H619.35ZM623.35 327.11H625.65V335.06H623.35ZM631.35 320.04H633.65V333.82H631.35ZM638.35 308.04H640.65V313.86H638.35ZM646.35 319.16H648.65V322.69H646.35ZM666.35 325.34H668.65V327.99H666.35ZM670.35 331.52H672.65V334.17H670.35ZM678.35 325.34H680.65V328.52H678.35ZM685.35 327.46H687.65V330.64H685.35ZM689.35 312.98H691.65V324.99H689.35ZM697.35 316.16H699.65V318.28H697.35ZM701.35 301.50H703.65V306.80H701.35ZM713.35 308.57H715.65V310.33H713.35ZM717.35 306.27H719.65V307.68H717.35ZM721.35 302.38H723.65V304.15H721.35ZM725.35 296.73H727.65V300.26H725.35ZM736.35 290.38H738.65V297.09H736.35ZM740.35 281.80H742.65V288.86H740.35ZM744.35 275.62H746.65V277.03H744.35ZM752.35 270.32H754.65V275.62H752.35ZM760.35 268.55H762.65V271.20H760.35ZM772.35 268.20H774.65V269.44H772.35ZM776.35 261.84H778.65V264.14H776.35ZM791.35 276.50H793.65V281.80H791.35ZM803.35 272.09H805.65V279.15H803.35ZM834.35 278.80H836.65V284.45H834.35ZM842.35 285.86H844.65V291.51H842.35ZM854.35 305.64H856.65V311.82H854.35ZM858.35 300.34H860.65V307.41H858.35ZM866.35 291.16H868.65V294.69H866.35ZM878.35 298.93H880.65V302.11H878.35ZM885.35 299.99H887.65V304.76H885.35ZM893.35 321.57H895.65V325.63H893.35ZM897.35 320.33H899.65V322.63H897.35ZM909.35 332.16H911.65V340.64H909.35ZM921.35 332.16H923.65V333.93H921.35ZM928.35 322.10H930.65V330.93H928.35ZM948.35 344.53H950.65V347.70H948.35ZM960.35 330.40H962.65V334.99H960.35ZM976.35 330.04H978.65V334.99H976.35ZM1003.35 357.42H1005.65V362.72H1003.35ZM1011.35 365.36H1013.65V366.60H1011.35ZM1015.35 362.72H1017.65V365.36H1015.35ZM1019.35 358.30H1021.65V366.25H1019.35ZM1026.35 349.82H1028.65V352.65H1026.35ZM1034.35 352.12H1036.65V355.65H1034.35Z" stroke="#f00000" stroke-width="1" fill="#fff"/>
<path d="M87.1 279.7C91.0 279.2 102.7 277.2 110.6 276.5C118.4 275.8 126.2 276.2 134.0 275.6C141.9 275.1 149.7 273.9 157.5 273.0C165.4 272.0 173.2 270.9 181.0 270.0C188.8 269.1 198.0 268.5 204.5 267.7C211.0 266.9 215.0 265.8 220.2 265.0C225.5 264.3 232.5 263.6 235.9 263.3C239.3 262.9 238.0 263.2 240.6 263.0C243.2 262.8 247.1 262.1 251.5 262.1C256.0 262.1 262.0 262.6 267.3 263.0C272.5 263.3 277.7 263.7 283.0 264.2C288.2 264.7 293.5 265.5 298.7 266.1C303.9 266.8 308.2 267.5 314.4 267.9C320.6 268.3 328.8 268.6 336.0 268.6C343.1 268.7 350.6 268.5 357.5 268.3C364.4 268.1 373.2 267.5 377.1 267.4C381.0 267.3 378.4 267.7 381.1 267.7C383.7 267.6 389.0 267.1 392.9 267.1C396.8 267.1 400.6 267.4 404.5 267.7C408.5 268.0 412.5 268.3 416.4 268.9C420.3 269.5 424.1 270.2 428.0 271.2C431.9 272.2 436.0 273.6 439.9 274.7C443.8 275.9 447.6 277.2 451.5 278.3C455.4 279.3 459.4 280.1 463.4 280.9C467.3 281.7 471.3 282.4 475.2 283.0C479.1 283.7 482.9 284.3 486.8 284.8C490.8 285.3 494.7 285.8 498.7 286.2C502.6 286.6 506.6 286.9 510.5 287.1C514.4 287.3 519.6 287.4 522.2 287.5C524.8 287.5 524.7 287.5 526.0 287.5C527.4 287.4 526.7 287.5 530.0 287.4C533.3 287.3 540.5 287.4 545.7 286.9C551.0 286.4 556.2 285.4 561.4 284.4C566.7 283.4 571.9 282.0 577.2 280.9C582.4 279.8 589.0 278.3 592.9 277.7C596.8 277.1 598.0 277.4 600.6 277.3C603.2 277.2 606.4 277.2 608.4 277.2C610.4 277.2 609.2 277.0 612.4 277.3C615.7 277.6 622.8 278.5 628.0 279.1C633.2 279.7 638.4 280.2 643.7 280.8C648.9 281.5 654.2 282.3 659.4 283.0C664.6 283.6 669.9 284.2 675.1 284.7C680.4 285.3 685.6 285.8 690.8 286.1C696.1 286.5 701.3 286.8 706.6 286.8C711.8 286.9 716.9 286.8 722.1 286.5C727.3 286.2 734.5 285.5 737.8 285.1C741.1 284.7 738.5 284.3 741.8 284.1C745.0 283.9 752.2 284.2 757.5 284.1C762.7 284.0 768.0 283.7 773.2 283.6C778.4 283.4 783.5 283.0 788.7 283.0C794.0 283.0 799.9 283.2 804.5 283.6C809.1 283.9 812.4 284.7 816.3 285.3C820.2 286.0 824.7 287.2 827.9 287.6C831.2 288.1 833.3 287.8 835.9 288.0C838.5 288.2 841.0 288.6 843.7 288.9C846.3 289.2 849.0 289.2 851.6 289.7C854.2 290.3 856.8 291.6 859.4 292.4C862.0 293.2 864.5 294.0 867.2 294.7C869.8 295.4 872.5 296.0 875.1 296.5C877.7 296.9 880.9 297.0 882.9 297.2C884.8 297.4 885.4 297.5 886.8 297.7C888.1 297.9 887.4 298.2 890.7 298.6C894.0 299.0 901.2 299.7 906.4 300.0C911.7 300.3 916.9 300.1 922.1 300.4C927.4 300.6 932.6 301.1 937.9 301.4C943.1 301.7 948.2 302.0 953.4 302.1C958.6 302.3 964.4 302.2 969.1 302.3C973.9 302.4 977.9 302.4 981.8 302.7C985.7 302.9 988.8 303.3 992.6 303.9C996.4 304.5 1000.5 305.4 1004.4 306.2C1008.4 307.0 1012.4 308.1 1016.3 308.9C1020.2 309.6 1024.0 310.2 1027.9 311.0C1031.8 311.7 1037.8 312.9 1039.8 313.3" stroke="#9a20f0" stroke-width="1.1" fill="none" stroke-linejoin="round" stroke-linecap="round"/>
<path d="M86.5 285.7C87.9 286.3 92.2 288.4 94.8 289.4C97.5 290.4 100.0 291.2 102.6 291.9C105.2 292.5 107.9 293.2 110.6 293.3C113.2 293.4 115.7 293.0 118.3 292.4C120.9 291.8 123.6 290.9 126.3 289.8C128.9 288.7 131.4 287.3 134.0 285.9C136.6 284.5 139.2 282.8 141.8 281.3C144.4 279.8 147.1 278.4 149.8 277.1C152.4 275.7 154.9 274.6 157.5 273.0C160.1 271.4 162.9 269.8 165.5 267.7C168.1 265.6 170.7 263.0 173.2 260.6C175.8 258.3 178.4 255.8 181.0 253.6C183.6 251.4 186.3 249.3 189.0 247.4C191.6 245.5 194.1 243.7 196.7 242.1C199.3 240.5 201.9 238.9 204.5 237.7C207.1 236.4 209.8 235.4 212.5 234.7C215.1 233.9 217.6 233.5 220.2 233.3C222.8 233.0 225.4 233.0 228.0 233.3C230.6 233.6 234.1 234.6 235.9 235.0C237.7 235.4 236.9 235.1 238.8 235.6C240.8 236.1 244.7 237.1 247.7 238.2C250.6 239.4 253.2 241.2 256.5 242.7C259.8 244.1 263.5 245.8 267.3 247.1C271.0 248.4 275.8 249.3 279.1 250.6C282.4 251.9 284.2 253.3 286.9 255.0C289.5 256.8 292.2 258.8 294.8 261.2C297.4 263.6 300.0 266.6 302.6 269.2C305.2 271.7 307.9 274.3 310.5 276.2C313.1 278.1 315.7 279.5 318.3 280.6C320.9 281.7 323.3 282.0 326.2 282.9C329.2 283.8 332.7 284.8 336.0 285.9C339.2 287.0 342.9 288.6 345.8 289.5C348.8 290.3 351.0 290.6 353.6 291.2C356.2 291.8 358.8 292.4 361.4 293.0C364.0 293.6 366.7 294.3 369.3 294.8C372.0 295.2 375.2 295.4 377.1 295.6C379.1 295.8 379.1 295.8 381.1 295.9C383.0 296.1 386.2 296.4 388.8 296.5C391.4 296.5 394.2 296.6 396.8 296.5C399.4 296.3 401.9 295.8 404.5 295.4C407.2 295.0 409.9 294.5 412.5 294.3C415.1 294.2 417.7 294.3 420.3 294.7C422.9 295.1 425.4 296.1 428.0 296.8C430.7 297.5 433.4 298.2 436.0 298.9C438.6 299.7 441.2 300.7 443.8 301.2C446.3 301.8 448.9 302.0 451.5 302.1C454.1 302.2 456.9 302.0 459.5 301.8C462.1 301.5 464.6 300.8 467.2 300.3C469.9 299.9 472.6 299.4 475.2 298.9C477.8 298.5 480.3 298.2 483.0 297.7C485.6 297.2 488.3 296.7 490.9 295.9C493.5 295.2 496.1 294.2 498.7 293.3C501.3 292.3 503.8 291.2 506.4 290.1C509.1 289.0 511.8 287.9 514.4 286.6C517.0 285.3 520.2 283.4 522.2 282.3C524.1 281.2 524.7 280.5 526.0 279.9C527.4 279.2 528.0 279.8 530.0 278.6C532.0 277.3 535.3 274.3 537.9 272.4C540.6 270.5 543.1 268.7 545.7 267.1C548.3 265.5 551.0 264.0 553.7 262.7C556.3 261.4 558.8 260.5 561.4 259.2C564.0 257.8 566.6 256.0 569.2 254.4C571.8 252.8 574.5 250.8 577.2 249.4C579.8 248.1 582.3 246.9 584.9 246.3C587.5 245.6 590.3 245.4 592.9 245.4C595.5 245.4 598.1 245.7 600.6 246.3C603.2 246.9 602.5 245.9 608.4 249.1C614.3 252.3 630.0 261.7 635.9 265.3C641.8 268.9 641.1 268.5 643.7 270.6C646.3 272.7 649.0 274.9 651.6 277.7C654.3 280.5 656.8 284.1 659.4 287.4C662.0 290.6 664.6 294.0 667.2 297.1C669.8 300.2 672.5 303.1 675.1 305.9C677.7 308.7 680.3 311.8 682.9 313.9C685.5 315.9 688.2 317.2 690.8 318.3C693.5 319.4 696.0 320.0 698.6 320.4C701.2 320.8 703.9 320.9 706.6 320.9C709.2 320.9 711.7 320.8 714.3 320.4C716.9 320.0 719.5 319.3 722.1 318.6C724.7 318.0 727.4 317.2 730.0 316.5C732.7 315.8 735.9 315.0 737.8 314.4C739.8 313.8 739.8 313.6 741.8 312.7C743.7 311.8 746.9 310.5 749.5 309.2C752.2 307.8 754.9 306.4 757.5 304.8C760.1 303.1 762.6 301.2 765.3 299.5C767.9 297.7 770.6 295.8 773.2 294.2C775.8 292.5 778.4 291.0 781.0 289.7C783.6 288.5 786.1 287.6 788.7 286.6C791.4 285.5 794.1 284.5 796.7 283.6C799.3 282.6 801.8 281.7 804.5 280.9C807.1 280.1 809.8 279.4 812.4 278.8C815.0 278.2 817.6 277.7 820.2 277.4C822.8 277.1 825.3 277.0 827.9 276.9C830.6 276.7 833.3 276.5 835.9 276.5C838.5 276.5 841.0 276.6 843.7 276.9C846.3 277.1 849.0 277.6 851.6 278.3C854.2 278.9 856.8 279.8 859.4 280.6C862.0 281.3 864.5 281.9 867.2 282.7C869.8 283.5 872.5 284.5 875.1 285.3C877.7 286.2 880.9 287.0 882.9 287.6C884.8 288.2 885.4 288.7 886.8 289.0C888.1 289.4 888.7 288.9 890.7 289.8C892.7 290.7 896.0 292.8 898.7 294.4C901.3 295.9 903.8 297.5 906.4 299.1C909.0 300.8 911.6 303.0 914.2 304.4C916.8 305.9 919.5 306.8 922.1 308.0C924.8 309.1 927.3 310.2 929.9 311.5C932.5 312.8 935.2 314.6 937.9 315.9C940.5 317.2 943.0 318.4 945.6 319.4C948.2 320.5 950.8 321.4 953.4 322.1C956.0 322.8 958.7 323.1 961.3 323.9C964.0 324.7 966.5 325.9 969.1 326.9C971.7 327.8 974.4 328.7 977.1 329.7C979.7 330.7 982.2 331.8 984.8 332.7C987.4 333.6 990.0 334.5 992.6 335.3C995.2 336.1 997.9 336.7 1000.6 337.5C1003.2 338.2 1005.7 338.9 1008.3 339.8C1010.9 340.6 1013.6 341.7 1016.3 342.4C1018.9 343.1 1021.4 343.5 1024.0 344.2C1026.6 344.8 1029.2 345.8 1031.8 346.3C1034.4 346.7 1038.4 346.7 1039.8 346.8" stroke="#169c9c" stroke-width="1.15" fill="none" stroke-linejoin="round" stroke-linecap="round"/>
<path d="M87.1 311.5C87.7 311.5 89.7 311.9 90.9 311.5C92.2 311.1 93.5 310.0 94.8 309.2C96.1 308.4 97.4 307.9 98.7 306.5C100.0 305.2 101.3 302.7 102.6 301.2C103.9 299.8 105.3 299.2 106.7 297.7C108.0 296.2 109.3 294.6 110.6 292.4C111.8 290.2 113.1 287.0 114.4 284.5C115.7 282.0 117.0 279.3 118.3 277.4C119.6 275.5 120.9 274.4 122.2 273.0C123.5 271.6 124.9 270.8 126.3 268.9C127.6 267.0 128.9 264.1 130.2 261.5C131.4 259.0 132.7 256.1 134.0 253.6C135.3 251.1 136.6 248.6 137.9 246.5C139.2 244.4 140.5 242.7 141.8 241.2C143.1 239.7 144.5 239.0 145.9 237.7C147.2 236.3 148.5 234.5 149.8 233.3C151.1 232.0 152.3 231.0 153.6 230.1C154.9 229.2 156.2 228.6 157.5 228.0C158.8 227.3 160.1 226.6 161.4 226.2C162.7 225.8 164.2 225.1 165.5 225.3C166.8 225.5 168.1 227.4 169.4 227.6C170.7 227.8 171.9 226.3 173.2 226.5C174.5 226.8 175.8 228.0 177.1 228.8C178.4 229.7 179.7 231.0 181.0 231.5C182.3 231.9 183.6 231.6 184.9 231.5C186.2 231.3 187.6 230.4 189.0 230.6C190.3 230.8 191.6 232.5 192.8 232.9C194.1 233.3 195.4 233.4 196.7 233.3C198.0 233.1 199.3 232.1 200.6 231.8C201.9 231.5 203.2 231.5 204.5 231.5C205.8 231.5 207.2 231.8 208.6 231.8C209.9 231.8 211.2 231.3 212.5 231.5C213.7 231.7 215.0 232.3 216.3 232.9C217.6 233.5 218.9 233.9 220.2 235.0C221.5 236.1 222.8 237.8 224.1 239.4C225.4 241.1 226.7 243.1 228.0 244.7C229.3 246.4 230.5 247.9 231.9 249.2C233.2 250.4 234.0 250.7 236.0 252.1C238.0 253.5 241.2 256.6 243.8 257.7C246.4 258.7 248.9 257.4 251.5 258.6C254.2 259.7 256.9 263.1 259.5 264.7C262.1 266.4 264.6 267.8 267.3 268.3C269.9 268.8 272.9 267.4 275.2 267.7C277.5 268.0 279.3 268.3 281.2 270.0C283.2 271.7 285.3 275.5 286.9 278.0C288.5 280.5 289.4 282.4 290.8 285.0C292.1 287.7 293.5 291.2 294.8 293.9C296.1 296.5 297.4 298.8 298.7 300.9C300.0 303.1 301.3 304.9 302.6 306.6C303.9 308.3 305.1 309.9 306.5 311.2C307.8 312.4 309.2 313.8 310.5 314.2C311.9 314.5 313.1 314.2 314.4 313.3C315.7 312.4 317.0 310.7 318.3 308.9C319.6 307.1 320.9 304.5 322.2 302.7C323.5 300.9 324.9 299.6 326.2 298.3C327.6 297.0 328.8 295.8 330.1 294.8C331.4 293.7 332.7 292.6 334.0 291.8C335.3 290.9 336.6 289.8 337.9 289.5C339.2 289.1 339.8 289.3 341.8 289.5C343.8 289.6 347.8 290.3 349.7 290.3C351.7 290.4 352.3 290.3 353.6 290.0C354.9 289.7 355.6 288.8 357.5 288.6C359.4 288.4 363.3 288.7 365.3 288.9C367.2 289.2 368.0 290.1 369.3 290.0C370.7 289.9 371.9 288.1 373.2 288.2C374.5 288.3 375.8 290.3 377.1 290.7C378.4 291.1 379.8 290.5 381.1 290.6C382.4 290.8 383.6 291.2 384.9 291.5C386.2 291.8 387.5 291.5 388.8 292.4C390.2 293.3 391.6 295.3 392.9 296.8C394.2 298.3 395.5 299.9 396.8 301.2C398.1 302.5 399.4 303.9 400.7 304.8C402.0 305.6 403.3 306.2 404.5 306.5C405.8 306.8 407.1 306.8 408.4 306.5C409.8 306.2 411.2 305.6 412.5 304.8C413.8 303.9 415.1 302.3 416.4 301.2C417.7 300.2 419.0 299.0 420.3 298.6C421.6 298.2 422.9 298.3 424.2 298.9C425.4 299.5 426.7 300.8 428.0 302.1C429.4 303.4 430.8 305.2 432.1 306.5C433.4 307.8 434.7 308.8 436.0 310.1C437.3 311.3 438.6 312.9 439.9 314.1C441.2 315.4 442.5 317.0 443.8 317.6C445.0 318.3 446.3 318.4 447.6 318.0C448.9 317.6 450.2 316.5 451.5 315.4C452.8 314.2 454.3 313.6 455.6 310.9C456.9 308.3 458.2 303.0 459.5 299.5C460.8 295.9 462.1 292.7 463.4 289.7C464.7 286.8 465.9 284.3 467.2 281.8C468.6 279.3 470.0 276.3 471.3 274.7C472.6 273.2 473.9 272.4 475.2 272.4C476.5 272.4 477.8 274.1 479.1 274.7C480.4 275.3 481.7 275.8 483.0 276.0C484.3 276.2 485.5 275.7 486.8 276.0C488.2 276.2 489.6 277.5 490.9 277.4C492.2 277.3 493.5 276.0 494.8 275.3C496.1 274.5 497.4 273.4 498.7 273.0C500.0 272.5 501.3 272.6 502.6 272.4C503.9 272.3 505.1 272.5 506.4 272.1C507.8 271.7 509.2 270.8 510.5 270.0C511.8 269.1 513.1 267.8 514.4 266.8C515.7 265.7 517.0 264.6 518.3 263.6C519.6 262.6 520.9 261.5 522.2 260.6C523.5 259.7 524.7 258.8 526.0 258.0C527.4 257.1 528.0 255.9 530.0 255.6C532.0 255.3 535.3 256.2 537.9 256.2C540.6 256.2 543.8 256.3 545.7 255.6C547.7 255.0 548.3 254.0 549.6 252.1C550.9 250.2 552.3 246.9 553.7 244.2C555.0 241.4 556.3 237.8 557.5 235.3C558.8 232.8 560.1 231.1 561.4 229.1C562.7 227.2 564.0 225.2 565.3 223.8C566.6 222.5 567.9 221.7 569.2 221.2C570.5 220.7 571.9 221.1 573.3 220.8C574.6 220.6 575.9 220.1 577.2 219.8C578.4 219.5 579.7 218.5 581.0 219.1C582.3 219.6 583.6 221.4 584.9 223.0C586.2 224.5 587.5 226.3 588.8 228.3C590.1 230.2 591.5 231.8 592.9 234.4C594.2 237.1 595.5 239.9 596.8 244.2C598.1 248.4 599.4 254.6 600.6 260.0C601.9 265.5 603.2 272.1 604.5 276.8C605.8 281.5 607.0 284.9 608.4 288.3C609.7 291.6 611.1 294.6 612.4 297.1C613.8 299.6 615.0 301.2 616.3 303.3C617.6 305.3 618.9 307.4 620.2 309.4C621.5 311.5 622.8 313.7 624.1 315.6C625.4 317.5 626.6 319.5 628.0 320.9C629.3 322.4 630.7 323.7 632.0 324.5C633.4 325.2 634.6 325.7 635.9 325.3C637.2 325.0 638.5 323.0 639.8 322.2C641.1 321.3 642.4 320.7 643.7 320.0C645.0 319.4 646.2 318.6 647.6 318.3C648.9 317.9 650.3 317.8 651.6 317.9C653.0 318.1 654.2 318.5 655.5 319.2C656.8 319.8 658.1 321.2 659.4 321.8C660.7 322.4 662.0 322.2 663.3 322.7C664.6 323.2 665.8 324.3 667.2 325.0C668.5 325.7 669.9 326.5 671.2 327.1C672.6 327.7 673.8 328.2 675.1 328.5C676.4 328.8 677.7 328.8 679.0 328.9C680.3 329.0 681.6 329.1 682.9 329.2C684.2 329.4 685.5 330.2 686.8 329.8C688.1 329.3 689.5 327.8 690.8 326.8C692.2 325.7 693.4 324.5 694.7 323.6C696.0 322.6 697.3 322.1 698.6 320.9C699.9 319.7 701.2 318.0 702.5 316.5C703.8 315.0 705.2 313.1 706.6 312.1C707.9 311.1 709.1 310.9 710.4 310.3C711.7 309.7 713.0 309.2 714.3 308.6C715.6 308.0 716.9 307.3 718.2 306.8C719.5 306.3 720.8 306.2 722.1 305.6C723.4 305.0 724.7 304.0 726.0 303.3C727.3 302.5 728.7 301.6 730.0 301.0C731.4 300.3 732.6 300.0 733.9 299.2C735.2 298.4 736.5 297.5 737.8 296.2C739.1 294.9 740.5 293.0 741.8 291.5C743.1 290.0 744.4 288.9 745.7 287.1C746.9 285.3 748.2 282.7 749.5 280.9C750.9 279.2 752.3 277.7 753.6 276.5C754.9 275.3 756.2 274.4 757.5 273.9C758.8 273.3 760.1 273.3 761.4 273.0C762.7 272.7 764.0 272.3 765.3 272.1C766.5 271.9 767.8 272.0 769.1 271.7C770.5 271.4 771.9 270.7 773.2 270.3C774.5 269.9 775.8 269.6 777.1 269.4C778.4 269.3 779.7 269.5 781.0 269.4C782.3 269.3 783.6 268.8 784.9 268.9C786.2 269.0 787.4 269.4 788.7 270.0C790.1 270.5 791.5 271.4 792.8 272.1C794.1 272.8 795.4 273.6 796.7 274.2C798.0 274.8 799.3 275.3 800.6 275.6C801.9 275.9 803.2 275.9 804.5 276.0C805.8 276.0 807.0 275.9 808.3 276.0C809.7 276.1 811.1 276.1 812.4 276.5C813.7 276.9 815.0 277.6 816.3 278.3C817.6 278.9 818.9 279.8 820.2 280.6C821.5 281.4 822.8 282.2 824.1 283.0C825.4 283.9 826.6 285.0 827.9 285.9C829.3 286.7 830.7 287.8 832.0 288.0C833.3 288.2 834.6 287.4 835.9 287.1C837.2 286.8 838.5 286.4 839.8 286.2C841.1 286.1 842.4 286.5 843.7 286.2C845.0 285.9 846.2 284.7 847.5 284.4C848.9 284.2 850.3 283.6 851.6 284.4C852.9 285.3 854.2 288.0 855.5 289.7C856.8 291.5 858.1 293.6 859.4 295.0C860.7 296.5 862.0 297.8 863.3 298.6C864.6 299.4 865.8 299.9 867.2 300.0C868.5 300.0 869.9 299.3 871.2 298.9C872.5 298.5 873.8 298.0 875.1 297.7C876.4 297.3 877.7 297.0 879.0 296.8C880.3 296.6 881.6 296.2 882.9 296.5C884.2 296.8 885.4 297.5 886.8 298.6C888.1 299.6 889.4 301.0 890.7 302.7C892.0 304.4 893.3 306.9 894.6 308.9C895.9 310.8 897.3 312.2 898.7 314.2C900.0 316.1 901.2 318.4 902.5 320.3C903.8 322.2 905.1 324.2 906.4 325.6C907.7 327.1 909.0 328.3 910.3 329.2C911.6 330.0 912.9 330.4 914.2 330.9C915.5 331.4 916.9 331.8 918.3 332.2C919.6 332.5 920.8 333.3 922.1 333.2C923.4 333.2 924.7 332.2 926.0 331.8C927.3 331.4 928.6 331.2 929.9 330.9C931.2 330.6 932.5 330.0 933.8 330.0C935.1 330.1 936.5 330.8 937.9 331.5C939.2 332.1 940.4 333.0 941.7 333.9C943.0 334.9 944.3 336.0 945.6 337.1C946.9 338.2 948.2 339.3 949.5 340.3C950.8 341.2 952.1 342.6 953.4 342.8C954.7 343.0 956.1 342.1 957.5 341.5C958.8 340.9 960.1 340.2 961.3 339.2C962.6 338.3 963.9 336.8 965.2 335.7C966.5 334.6 967.8 333.4 969.1 332.7C970.4 332.0 971.7 331.8 973.0 331.5C974.3 331.2 975.7 330.9 977.1 330.9C978.4 331.0 979.7 331.2 980.9 331.8C982.2 332.4 983.5 333.5 984.8 334.5C986.1 335.4 987.4 336.3 988.7 337.5C990.0 338.6 991.3 340.1 992.6 341.5C993.9 343.0 995.3 344.8 996.7 346.3C998.0 347.8 999.3 349.0 1000.6 350.4C1001.8 351.7 1003.1 353.1 1004.4 354.4C1005.7 355.7 1007.0 357.1 1008.3 358.3C1009.6 359.5 1010.9 360.7 1012.2 361.5C1013.5 362.3 1014.9 362.9 1016.3 363.2C1017.6 363.6 1018.9 363.8 1020.2 363.6C1021.4 363.4 1022.7 362.6 1024.0 361.8C1025.3 361.1 1026.6 360.0 1027.9 359.2C1029.2 358.4 1030.5 357.6 1031.8 356.9C1033.1 356.2 1034.5 355.6 1035.9 355.1C1037.2 354.6 1039.1 354.1 1039.8 353.9" stroke="#f00000" stroke-width="1.15" fill="none" stroke-linejoin="round" stroke-linecap="round"/>
</svg>
<span class="t" style="left:48.2px;top:15.200000000000001px;font-size:13px;line-height:16px;color:#111;letter-spacing:-0.45px;transform:scaleY(1.1);">7203</span>
<div style="left:833.7px;top:83px;width:217.8px;height:18px;background:#e7e7e7;border:1px solid #a9b7c3;border-top:none;border-bottom:2px solid #a9b9c6;"></div>
<span class="t" style="left:839.3px;top:84.9px;font-size:13px;line-height:16px;color:#111;letter-spacing:0.5px;">2009/07/14</span>
<span class="t" style="left:953.4px;top:84.9px;font-size:13px;line-height:16px;color:#111;letter-spacing:0.5px;">2010/07/13</span>
<div style="left:829.2px;top:107px;width:165.8px;height:69.5px;background:rgba(222,230,236,0.62);border:2px solid #a3b6c6;"></div>
<div style="left:831.2px;top:109px;width:161.8px;height:15.5px;background:#cdd8e0;border-bottom:1.5px solid #aebfcc;"></div>
<div style="left:978px;top:110.5px;width:14px;height:11.5px;background:#c3ced6;border:1px solid #8c9aa6;"></div>
<div style="left:981px;top:115.6px;width:8px;height:1.6px;background:#7d8a96;"></div>
<span class="t" style="right:270px;top:128.5px;font-size:13px;line-height:16px;color:#f00000;">5</span>
<span class="t" style="right:151.60000000000002px;top:128.5px;font-size:13px;line-height:16px;color:#f00000;">3,109</span>
<span class="t" style="right:270px;top:144.5px;font-size:13px;line-height:16px;color:#109a9a;">25</span>
<span class="t" style="right:151.60000000000002px;top:144.5px;font-size:13px;line-height:16px;color:#109a9a;">3,161</span>
<span class="t" style="right:270px;top:160.20000000000002px;font-size:13px;line-height:16px;color:#9a10f0;">75</span>
<span class="t" style="right:151.60000000000002px;top:160.20000000000002px;font-size:13px;line-height:16px;color:#9a10f0;">3,424</span>
<div style="left:121.8px;top:339px;width:159.6px;height:175.3px;background:rgba(222,230,236,0.62);border:2px solid #a3b6c6;"></div>
<div style="left:123.8px;top:341px;width:155.6px;height:15.5px;background:#cdd8e0;border-bottom:1.5px solid #aebfcc;"></div>
<div style="left:264.3px;top:342.6px;width:14px;height:11px;background:#d5dde3;border:1px solid #8c9aa6;"></div>
<span class="t" style="right:862.7px;top:365.29999999999995px;font-size:13px;line-height:16px;color:#111;letter-spacing:0.5px;">2010/07/13</span>
<span class="t" style="right:862px;top:383.42999999999995px;font-size:13px;line-height:16px;color:#111;letter-spacing:-0.1px;">3,140</span>
<span class="t" style="right:862px;top:401.55999999999995px;font-size:13px;line-height:16px;color:#111;letter-spacing:-0.1px;">3,155</span>
<span class="t" style="right:862px;top:419.68999999999994px;font-size:13px;line-height:16px;color:#111;letter-spacing:-0.1px;">3,100</span>
<span class="t" style="right:862px;top:437.81999999999994px;font-size:13px;line-height:16px;color:#111;letter-spacing:-0.1px;">3,125</span>
<span class="t" style="right:862px;top:455.94999999999993px;font-size:13px;line-height:16px;color:#111;letter-spacing:-0.1px;">5,625,600</span>
<span class="t" style="right:862px;top:474.0799999999999px;font-size:13px;line-height:16px;color:#111;letter-spacing:-0.1px;">11,844,900</span>
<span class="t" style="right:862px;top:492.2099999999999px;font-size:13px;line-height:16px;color:#111;letter-spacing:-0.1px;">1,160,100</span>
<span class="sr" style="left:111.3px;top:15.5px;width:26.5px;height:14.3px;font-size:13px;line-height:14.3px">検索</span>
<span class="sr" style="left:168.3px;top:12.7px;width:100.0px;height:15.4px;font-size:14px;line-height:15.4px">トヨタ自動車(株)</span>
<span class="sr" style="left:614.8px;top:12.6px;width:31.5px;height:17.6px;font-size:16px;line-height:17.6px">東京</span>
<span class="sr" style="left:1008.0px;top:16.2px;width:95.5px;height:14.6px;font-size:13.3px;line-height:14.6px">経済指標の描画</span>
<span class="sr" style="left:365.4px;top:53.3px;width:27.0px;height:14.6px;font-size:13.3px;line-height:14.6px">日足</span>
<span class="sr" style="left:412.0px;top:53.3px;width:28.5px;height:14.6px;font-size:13.3px;line-height:14.6px">週足</span>
<span class="sr" style="left:461.0px;top:53.3px;width:28.0px;height:14.6px;font-size:13.3px;line-height:14.6px">月足</span>
<span class="sr" style="left:507.3px;top:49.6px;width:41.3px;height:17.6px;font-size:16px;line-height:17.6px">1年間</span>
<span class="sr" style="left:617.3px;top:52.6px;width:53.8px;height:14.6px;font-size:13.3px;line-height:14.6px">任意期間</span>
<span class="sr" style="left:709.4px;top:52.6px;width:13.3px;height:14.6px;font-size:13.3px;line-height:14.6px">印</span>
<span class="sr" style="left:727.5px;top:52.6px;width:13.3px;height:14.6px;font-size:13.3px;line-height:14.6px">刷</span>
<span class="sr" style="left:799.0px;top:53.1px;width:73.3px;height:15.4px;font-size:14px;line-height:15.4px">移動平均線</span>
<span class="sr" style="left:905.0px;top:53.1px;width:72.3px;height:15.4px;font-size:14px;line-height:15.4px">一目均衡表</span>
<span class="sr" style="left:1010.0px;top:53.1px;width:102.3px;height:15.4px;font-size:14px;line-height:15.4px">価格帯別売買高</span>
<span class="sr" style="left:57.3px;top:378.8px;width:12.5px;height:13.8px;font-size:12.5px;line-height:13.8px">円</span>
<span class="sr" style="left:1055.3px;top:378.8px;width:12.5px;height:13.8px;font-size:12.5px;line-height:13.8px">円</span>
<span class="sr" style="left:30.0px;top:604.7px;width:40.4px;height:14.7px;font-size:13.4px;line-height:14.7px">百万株</span>
<span class="sr" style="left:1059.2px;top:604.7px;width:40.4px;height:14.7px;font-size:13.4px;line-height:14.7px">百万株</span>
<span class="sr" style="left:78.3px;top:415.2px;width:11.5px;height:12.7px;font-size:11.5px;line-height:12.7px">月</span>
<span class="sr" style="left:78.6px;top:603.1px;width:11.5px;height:12.7px;font-size:11.5px;line-height:12.7px">年</span>
<span class="sr" style="left:935.6px;top:84.2px;width:14.0px;height:15.4px;font-size:14px;line-height:15.4px">～</span>
<span class="sr" style="left:859.5px;top:130.3px;width:10.5px;height:11.6px;font-size:10.5px;line-height:11.6px">日</span>
<span class="sr" style="left:977.8px;top:130.3px;width:10.5px;height:11.6px;font-size:10.5px;line-height:11.6px">円</span>
<span class="sr" style="left:859.5px;top:146.3px;width:10.5px;height:11.6px;font-size:10.5px;line-height:11.6px">日</span>
<span class="sr" style="left:977.8px;top:146.3px;width:10.5px;height:11.6px;font-size:10.5px;line-height:11.6px">円</span>
<span class="sr" style="left:859.5px;top:162.1px;width:10.5px;height:11.6px;font-size:10.5px;line-height:11.6px">日</span>
<span class="sr" style="left:977.8px;top:162.1px;width:10.5px;height:11.6px;font-size:10.5px;line-height:11.6px">円</span>
<span class="sr" style="left:128.8px;top:366.2px;width:24.4px;height:13.2px;font-size:12px;line-height:13.2px">日付</span>
<span class="sr" style="left:128.8px;top:384.3px;width:24.4px;height:13.2px;font-size:12px;line-height:13.2px">始値</span>
<span class="sr" style="left:264.5px;top:385.4px;width:10.5px;height:11.6px;font-size:10.5px;line-height:11.6px">円</span>
<span class="sr" style="left:128.8px;top:402.5px;width:24.4px;height:13.2px;font-size:12px;line-height:13.2px">高値</span>
<span class="sr" style="left:264.5px;top:403.5px;width:10.5px;height:11.6px;font-size:10.5px;line-height:11.6px">円</span>
<span class="sr" style="left:128.8px;top:420.6px;width:24.4px;height:13.2px;font-size:12px;line-height:13.2px">安値</span>
<span class="sr" style="left:264.5px;top:421.6px;width:10.5px;height:11.6px;font-size:10.5px;line-height:11.6px">円</span>
<span class="sr" style="left:128.8px;top:438.7px;width:24.4px;height:13.2px;font-size:12px;line-height:13.2px">終値</span>
<span class="sr" style="left:264.5px;top:439.8px;width:10.5px;height:11.6px;font-size:10.5px;line-height:11.6px">円</span>
<span class="sr" style="left:129.1px;top:456.8px;width:33.5px;height:13.2px;font-size:12px;line-height:13.2px">売買高</span>
<span class="sr" style="left:264.5px;top:457.9px;width:10.5px;height:11.6px;font-size:10.5px;line-height:11.6px">株</span>
<span class="sr" style="left:129.1px;top:475.0px;width:33.5px;height:13.2px;font-size:12px;line-height:13.2px">買い残</span>
<span class="sr" style="left:264.5px;top:476.0px;width:10.5px;height:11.6px;font-size:10.5px;line-height:11.6px">株</span>
<span class="sr" style="left:129.1px;top:493.1px;width:33.5px;height:13.2px;font-size:12px;line-height:13.2px">売り残</span>
<span class="sr" style="left:264.5px;top:494.2px;width:10.5px;height:11.6px;font-size:10.5px;line-height:11.6px">株</span>
<svg width="1125" height="623" viewBox="0 0 1125 623" style="pointer-events:none">
<rect x="44" y="10.6" width="54.2" height="23.7" fill="none" stroke="#74746c" stroke-width="1.5" stroke-dasharray="2 2"/>
<g fill="none" stroke-linecap="round"><line x1="25.6" y1="23.4" x2="16.9" y2="32.2" stroke="#5c626e" stroke-width="2.2" stroke-linecap="butt"/><circle cx="30.7" cy="19" r="7" fill="#fff" stroke="#727884" stroke-width="1.15"/></g>
<text x="111.3" y="27.2" font-size="13.2" font-weight="bold" fill="#111" textLength="26.5" lengthAdjust="spacingAndGlyphs">検索</text>
<text x="168.3" y="25.3" font-size="14" fill="#000" textLength="100" lengthAdjust="spacingAndGlyphs">トヨタ自動車(株)</text>
<text x="614.8" y="27" font-size="16" fill="#000" textLength="31.5" lengthAdjust="spacingAndGlyphs">東京</text>
<path d="M738 16 L749.4 16 L743.7 25.4 Z" fill="#636363"/>
<text x="1008" y="28.2" font-size="13.6" font-weight="bold" fill="#111" textLength="95.5" lengthAdjust="spacingAndGlyphs">経済指標の描画</text>
<path d="M20.6 54 L33.2 54 L26.9 64.8 Z" fill="#636363"/>
<text x="365.4" y="65.3" font-size="13.5" font-weight="bold" fill="#0000f0" textLength="27" lengthAdjust="spacingAndGlyphs">日足</text>
<text x="412" y="65.3" font-size="14.2" font-weight="bold" fill="#111" textLength="28.5" lengthAdjust="spacingAndGlyphs">週足</text>
<text x="461" y="65.3" font-size="14" font-weight="bold" fill="#111" textLength="28" lengthAdjust="spacingAndGlyphs">月足</text>
<text x="507.3" y="64" font-size="16" fill="#000" textLength="41.3" lengthAdjust="spacingAndGlyphs">1年間</text>
<path d="M575.3 52.8 L586.5 52.8 L580.9 62.3 Z" fill="#636363"/>
<text x="617.3" y="64.6" font-size="13.4" font-weight="bold" fill="#111" textLength="53.8" lengthAdjust="spacingAndGlyphs">任意期間</text>
<text x="709.4" y="64.6" font-size="13.3" font-weight="bold" fill="#111">印</text>
<text x="727.5" y="64.6" font-size="13.3" font-weight="bold" fill="#111">刷</text>
<circle cx="785.8" cy="60" r="8.05" fill="#fff" stroke="#848484" stroke-width="2.1"/><circle cx="785.8" cy="60" r="6.2" fill="none" stroke="#dcd9e2" stroke-width="1.7"/>
<circle cx="785.8" cy="60" r="3.95" fill="#000"/>
<text x="799" y="65.7" font-size="14.6" font-weight="bold" fill="#111" textLength="73.3" lengthAdjust="spacingAndGlyphs">移動平均線</text>
<circle cx="893.1" cy="60" r="8.05" fill="#fff" stroke="#848484" stroke-width="2.1"/><circle cx="893.1" cy="60" r="6.2" fill="none" stroke="#dcd9e2" stroke-width="1.7"/>
<text x="905" y="65.7" font-size="14.4" font-weight="bold" fill="#111" textLength="72.3" lengthAdjust="spacingAndGlyphs">一目均衡表</text>
<circle cx="997.7" cy="60" r="8.05" fill="#fff" stroke="#848484" stroke-width="2.1"/><circle cx="997.7" cy="60" r="6.2" fill="none" stroke="#dcd9e2" stroke-width="1.7"/>
<text x="1010" y="65.7" font-size="14.6" font-weight="bold" fill="#111" textLength="102.3" lengthAdjust="spacingAndGlyphs">価格帯別売買高</text>
<text x="57.3" y="390" font-size="12.5" fill="#111">円</text>
<text x="1055.3" y="390" font-size="12.5" fill="#111">円</text>
<text x="30" y="616.8" font-size="13.4" fill="#111" textLength="40.4" lengthAdjust="spacingAndGlyphs">百万株</text>
<text x="1059.2" y="616.8" font-size="13.4" fill="#111" textLength="40.4" lengthAdjust="spacingAndGlyphs">百万株</text>
<text x="78.3" y="425.6" font-size="11.5" fill="#111">月</text>
<text x="78.6" y="613.5" font-size="11.5" fill="#111">年</text>
<text x="935.6" y="96.8" font-size="14" fill="#111">～</text>
<text x="859.5" y="139.8" font-size="10.5" fill="#f00000">日</text>
<text x="977.8" y="139.8" font-size="10.5" fill="#f00000">円</text>
<text x="859.5" y="155.8" font-size="10.5" fill="#109a9a">日</text>
<text x="977.8" y="155.8" font-size="10.5" fill="#109a9a">円</text>
<text x="859.5" y="171.5" font-size="10.5" fill="#9a10f0">日</text>
<text x="977.8" y="171.5" font-size="10.5" fill="#9a10f0">円</text>
<path d="M266 344.2 L276.6 352 M276.6 344.2 L266 352" stroke="#8c9aa6" stroke-width="1" fill="none"/>
<text x="128.8" y="377" font-size="12.2" font-weight="bold" fill="#111" textLength="24.4" lengthAdjust="spacingAndGlyphs">日付</text>
<text x="128.8" y="395.13" font-size="12.2" font-weight="bold" fill="#111" textLength="24.4" lengthAdjust="spacingAndGlyphs">始値</text>
<text x="264.5" y="394.83" font-size="10.5" fill="#111">円</text>
<text x="128.8" y="413.26" font-size="12.2" font-weight="bold" fill="#111" textLength="24.4" lengthAdjust="spacingAndGlyphs">高値</text>
<text x="264.5" y="412.96" font-size="10.5" fill="#111">円</text>
<text x="128.8" y="431.39" font-size="12.2" font-weight="bold" fill="#111" textLength="24.4" lengthAdjust="spacingAndGlyphs">安値</text>
<text x="264.5" y="431.09" font-size="10.5" fill="#111">円</text>
<text x="128.8" y="449.52" font-size="12.2" font-weight="bold" fill="#111" textLength="24.4" lengthAdjust="spacingAndGlyphs">終値</text>
<text x="264.5" y="449.22" font-size="10.5" fill="#111">円</text>
<text x="129.1" y="467.65" font-size="11.2" font-weight="bold" fill="#111" textLength="33.5" lengthAdjust="spacingAndGlyphs">売買高</text>
<text x="264.5" y="467.35" font-size="10.5" fill="#111">株</text>
<text x="129.1" y="485.78" font-size="11.2" font-weight="bold" fill="#111" textLength="33.5" lengthAdjust="spacingAndGlyphs">買い残</text>
<text x="264.5" y="485.48" font-size="10.5" fill="#111">株</text>
<text x="129.1" y="503.91" font-size="11.2" font-weight="bold" fill="#111" textLength="33.5" lengthAdjust="spacingAndGlyphs">売り残</text>
<text x="264.5" y="503.61" font-size="10.5" fill="#111">株</text>
</svg>
</div></body></html>
